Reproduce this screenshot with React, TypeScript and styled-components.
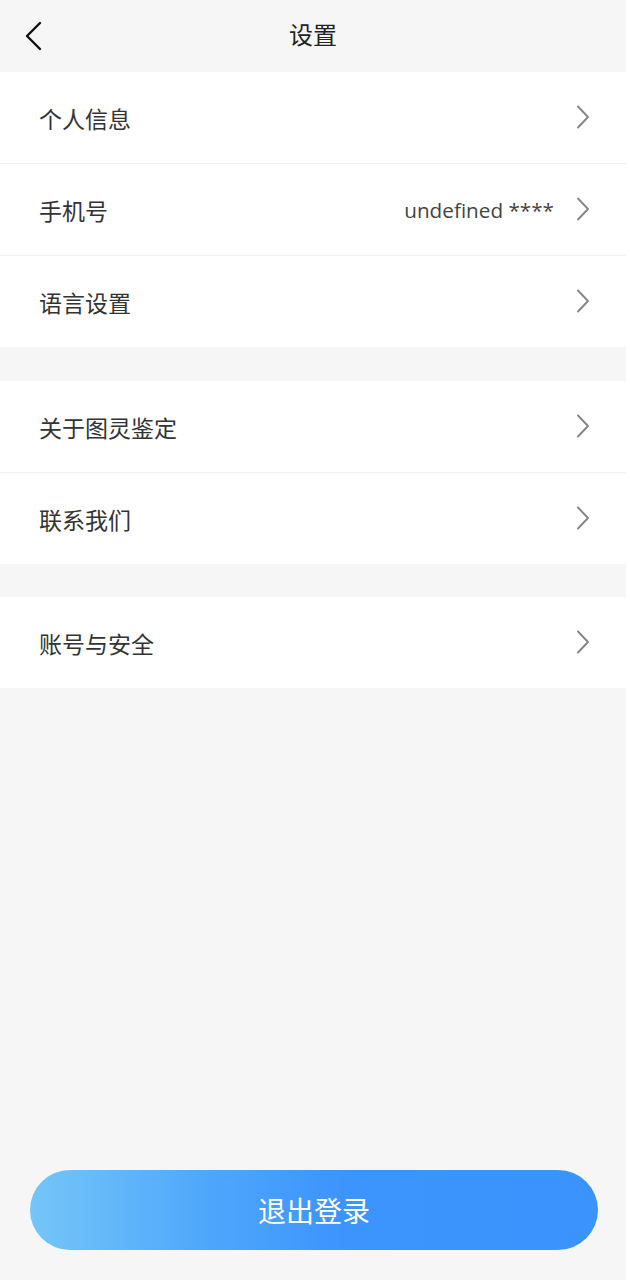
import styled, { createGlobalStyle } from "styled-components";

const GlobalStyle = createGlobalStyle`
  html, body {
    margin: 0;
    padding: 0;
    background: #ffffff;
  }
  body {
    font-family: "Noto Sans CJK SC", "Noto Sans", sans-serif;
  }
`;

interface RowItem {
  label: string;
  value?: string;
}

const groups: RowItem[][] = [
  [{ label: "个人信息" }, { label: "手机号", value: "undefined ****" }, { label: "语言设置" }],
  [{ label: "关于图灵鉴定" }, { label: "联系我们" }],
  [{ label: "账号与安全" }],
];

function Chevron() {
  return (
    <ChevronIcon viewBox="0 0 14 24" fill="none">
      <path d="M2 1.5 L12 12 L2 22.5" stroke="#868686" strokeWidth="1.9" strokeLinecap="round" strokeLinejoin="round" />
    </ChevronIcon>
  );
}

export default function App() {
  return (
    <Page>
      <GlobalStyle />
      <Header>
        <BackButton>
          <svg width="20" height="30" viewBox="0 0 20 30" fill="none">
            <path d="M16 2 L3 15 L16 28" stroke="#111" strokeWidth="2.4" strokeLinecap="round" strokeLinejoin="round" />
          </svg>
        </BackButton>
        <Title>设置</Title>
      </Header>
      <Groups>
        {groups.map((group, gi) => (
          <Group key={gi}>
            {group.map((item) => (
              <Row key={item.label}>
                <Label>{item.label}</Label>
                <Right>
                  {item.value && <Value>{item.value}</Value>}
                  <Chevron />
                </Right>
              </Row>
            ))}
          </Group>
        ))}
      </Groups>
      <Spacer />
      <Footer>
        <LogoutButton>退出登录</LogoutButton>
      </Footer>
    </Page>
  );
}

const Page = styled.div`
  width: 626px;
  height: 1280px;
  background: #f6f6f6;
  display: flex;
  flex-direction: column;
`;

const Header = styled.div`
  height: 72px;
  display: flex;
  align-items: center;
  justify-content: center;
  position: relative;
  background: #f6f6f6;
`;

const BackButton = styled.div`
  position: absolute;
  left: 24px;
  top: 21px;
  display: flex;
`;

const Title = styled.div`
  font-size: 24px;
  color: #222;
  line-height: 1;
  margin-top: -5px;
`;

const Groups = styled.div`
  display: flex;
  flex-direction: column;
  gap: 34px;
`;

const Group = styled.div`
  background: #fff;
  display: flex;
  flex-direction: column;

  &:last-child {
    margin-top: -1px;
  }
`;

const Row = styled.div`
  height: 92px;
  display: flex;
  align-items: center;
  justify-content: space-between;
  padding: 0 36px 0 39px;
  border-bottom: 1px solid #f0f0f0;
  box-sizing: border-box;

  &:last-child {
    border-bottom: none;
    height: 91px;
  }
`;

const Label = styled.div`
  font-size: 23px;
  color: #333;
`;

const Right = styled.div`
  display: flex;
  align-items: center;
  gap: 22px;
`;

const Value = styled.div`
  font-family: "Open Sans", "Noto Sans", sans-serif;
  font-size: 20.7px;
  color: #444;
`;

const ChevronIcon = styled.svg`
  width: 14px;
  height: 24px;
  margin-top: -1px;
`;

const Spacer = styled.div`
  flex: 1;
`;

const Footer = styled.div`
  padding: 0 28px 30px 30px;
`;

const LogoutButton = styled.div`
  height: 80px;
  border-radius: 40px;
  background: linear-gradient(90deg, #74c6f8 0%, #50a8fb 30%, #3c94fd 55%, #3b93fd 100%);
  color: #fff;
  font-size: 28px;
  display: flex;
  align-items: center;
  justify-content: center;
`;
